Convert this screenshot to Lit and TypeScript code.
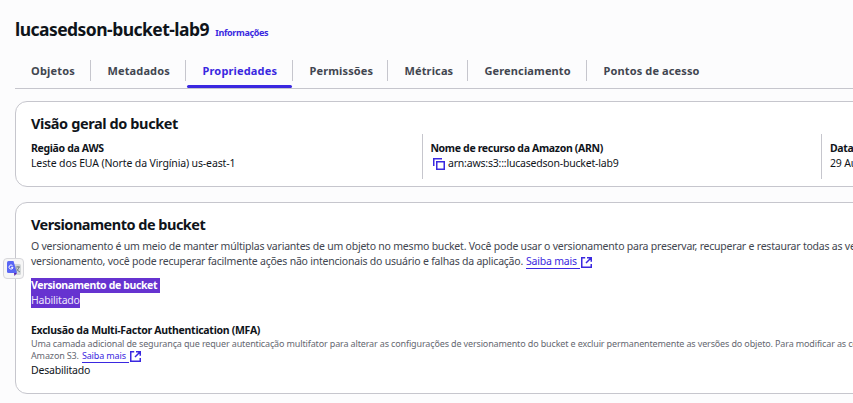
import { LitElement, html, css } from "lit";
import { classMap } from "lit/directives/class-map.js";

const external = html`<svg class="ext" viewBox="0 0 11 11" fill="none" stroke="currentColor" stroke-width="1.5">
  <path d="M4.2 .75H.75V10.25H10.25V7M6 .75H10.25V4.8M10.25 .75L5 6" /></svg>`;

const tabs = [
  { label: "Objetos", w: 75.5 },
  { label: "Metadados", w: 95 },
  { label: "Propriedades", w: 107, active: true },
  { label: "Permissões", w: 95 },
  { label: "Métricas", w: 80 },
  { label: "Gerenciamento", w: 119 },
  { label: "Pontos de acesso", w: 130 },
];

class AppRoot extends LitElement {
  static styles = css`
    :host { display: block; position: relative; box-sizing: border-box; width: 853px; height: 403px; overflow: hidden;
      background: #fcfcfd; color: #0f141a; font: 10.5px/15px "Noto Sans", sans-serif; letter-spacing: -0.2px; white-space: nowrap; }
    * { box-sizing: border-box; }
    h1, h2, p { margin: 0; }
    svg { display: block; }
    .page { padding-left: 15px; }
    .title { display: flex; align-items: baseline; height: 60px; padding-top: 17px; gap: 6.4px; }
    h1 { font-size: 17.5px; line-height: 25px; letter-spacing: -0.54px; }
    .info { color: #3a28e0; font-size: 9px; font-weight: 700; letter-spacing: -0.36px; }
    .tabs { display: flex; height: 29px; border-bottom: 1px solid #c6c6cd; }
    .tab { position: relative; flex: none; height: 28px; padding-left: 17px; font-size: 11px; line-height: 22px;
      font-weight: 700; letter-spacing: 0.13px; color: #424650; }
    .tab:first-child { padding-left: 16px; letter-spacing: 0.2px; }
    .tab:not(:last-child)::before { content: ""; position: absolute; right: 0; top: 0; width: 1px; height: 21px; background: #c6c6cd; }
    .tab.active { color: #3a28e0; letter-spacing: 0.16px; }
    .tab.active::after { content: ""; position: absolute; left: 1px; right: 1px; bottom: 0; height: 3px; border-radius: 2px; background: #3a28e0; }
    .card { width: 900px; border: 1px solid #c6c6cd; border-radius: 12px; background: #fff; padding-left: 15px; }
    .overview { height: 86px; margin-top: 12px; padding-top: 11px; }
    .versioning { height: 192px; margin-top: 15px; padding-top: 11px; }
    h2 { font-size: 14.5px; line-height: 20px; letter-spacing: -0.4px; }
    .versioning h2 { letter-spacing: -0.51px; }
    .cols { display: flex; margin-top: 1px; }
    .col { flex: none; width: 391px; height: 45px; padding-top: 7px; }
    .col + .col { width: 399px; border-left: 1px solid #c6c6cd; padding-left: 7.4px; }
    .col:last-child { padding-left: 8px; }
    .label { font-weight: 700; letter-spacing: -0.33px; }
    .region { letter-spacing: -0.13px; }
    .arn { display: flex; }
    .copy { width: 12px; height: 12px; margin: 2px 3px 0 2.6px; color: #3a28e0; }
    .desc { color: #424650; margin-top: 5px; letter-spacing: -0.217px; }
    .line { display: flex; }
    .link { color: #3a28e0; border-bottom: 1px solid #3a28e0; padding-right: 3px; margin-left: 3px; height: 15px; }
    .ext { width: 11px; height: 11px; margin: 3px 0 0 1px; color: #3a28e0; }
    .desc .line { height: 15px; }
    .sel { display: flex; flex-direction: column; align-items: flex-start; margin-top: 9px; color: #fff; }
    .sel p { background: #6633d0; height: 15px; }
    .sel .label { width: 129px; letter-spacing: -0.37px; }
    .sel .value { width: 49px; color: #ece6fb; }
    .mfa { margin-top: 15px; }
    .mfa .label { letter-spacing: -0.29px; }
    .small { color: #656871; font-size: 9px; line-height: 12px; letter-spacing: -0.14px; }
    .small .link { height: 13px; }
    .small .ext { margin-top: 1px; }
    .translate { position: absolute; left: 3px; top: 258px; width: 21px; height: 21px; border: 1px solid #d7d7db; border-radius: 4px; background: #f6f6f6; padding: 2px 0 0 3px; }
  `;
  render() {
    return html`
      <div class="page">
        <header class="title"><h1>lucasedson-bucket-lab9</h1><span class="info">Informações</span></header>
        <nav class="tabs">${tabs.map((t) => html`<div class=${classMap({ tab: true, active: !!t.active })} style="width:${t.w}px">${t.label}</div>`)}</nav>
        <section class="card overview">
          <h2>Visão geral do bucket</h2>
          <div class="cols">
            <div class="col"><p class="label">Região da AWS</p><p class="region">Leste dos EUA (Norte da Virgínia) us-east-1</p></div>
            <div class="col"><p class="label">Nome de recurso da Amazon (ARN)</p>
              <div class="arn"><svg class="copy" viewBox="0 0 12 12" fill="none" stroke="currentColor" stroke-width="1.5"><path d="M.75 8V.75H9M3.75 3.75H11.25V11.25H3.75Z" /></svg><span>arn:aws:s3:::lucasedson-bucket-lab9</span></div></div>
            <div class="col"><p class="label">Data de criação</p><p>29 August 2025</p></div>
          </div>
        </section>
        <section class="card versioning">
          <h2>Versionamento de bucket</h2>
          <div class="desc">
            <p>O versionamento é um meio de manter múltiplas variantes de um objeto no mesmo bucket. Você pode usar o versionamento para preservar, recuperar e restaurar todas as versões</p>
            <div class="line"><span>versionamento, você pode recuperar facilmente ações não intencionais do usuário e falhas da aplicação.</span><span class="link">Saiba mais</span>${external}</div>
          </div>
          <div class="sel"><p class="label">Versionamento de bucket</p><p class="value">Habilitado</p></div>
          <div class="mfa">
            <p class="label">Exclusão da Multi-Factor Authentication (MFA)</p>
            <div class="small">
              <p>Uma camada adicional de segurança que requer autenticação multifator para alterar as configurações de versionamento do bucket e excluir permanentemente as versões do objeto. Para modificar as configurações</p>
              <div class="line"><span>Amazon S3.</span><span class="link">Saiba mais</span>${external}</div>
            </div>
            <p>Desabilitado</p>
          </div>
        </section>
      </div>
      <div class="translate"><svg width="15" height="16" viewBox="0 0 15 16">
        <path d="M5 3H12.5Q14 3 14 4.5V12.5Q14 14 12.5 14H9Z" fill="#d3d7d8" />
        <path d="M8.5 6H13M11 5V6M12 6Q11.5 9 8.5 11M9.5 7.5Q10.5 10 13 11" fill="none" stroke="#78858b" stroke-width="1" />
        <path d="M1.5 0H6.5L10 12H1.5Q0 12 0 10.5V1.5Q0 0 1.5 0Z" fill="#5966f5" />
        <path d="M7 12H10L7.5 15Z" fill="#5a20a8" />
        <path d="M5.6 4.8A2 2 0 1 0 6 6.4H4.2" fill="none" stroke="#fff" stroke-width="1" /></svg></div>`;
  }
}
customElements.define("app-root", AppRoot);
